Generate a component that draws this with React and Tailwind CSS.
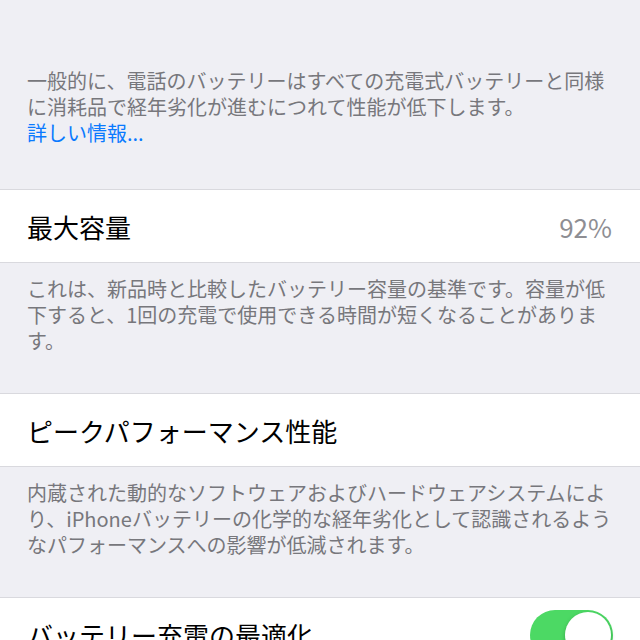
import React from 'react';

const font = { fontFamily: '"Noto Sans CJK JP", "Noto Sans", sans-serif' };

const Footer = ({ lines, className = '' }) => (
    <div className={`px-[27px] text-[20px] leading-[26px] text-[#77777c] ${className}`}>
        {lines.map((l, i) => (
            <div key={i} className="whitespace-nowrap">{l}</div>
        ))}
    </div>
);

const Cell = ({ children }) => (
    <div className="h-[74px] shrink-0 bg-white border-y border-[#d9d9de] flex items-center justify-between pl-[27px] pr-[28px] text-[26px] text-black">
        {children}
    </div>
);

const Toggle = () => (
    <div className="relative w-[83px] h-[50px] rounded-full bg-[#4cd964] shrink-0">
        <div className="absolute right-[2px] top-[2px] w-[46px] h-[46px] rounded-full bg-white shadow-[0_2px_4px_rgba(0,0,0,0.25)]" />
    </div>
);

export default function App() {
    return (
        <div className="w-[640px] h-[640px] overflow-hidden bg-[#efeff4] flex flex-col" style={font}>
            <div className="pt-[68px] pb-[43px] px-[27px] text-[20px] leading-[26px] text-[#77777c]">
                <div className="whitespace-nowrap">一般的に、電話のバッテリーはすべての充電式バッテリーと同様</div>
                <div className="whitespace-nowrap">に消耗品で経年劣化が進むにつれて性能が低下します。</div>
                <div className="text-[#0a7aff]">詳しい情報...</div>
            </div>

            <Cell>
                <span>最大容量</span>
                <span className="text-[#8e8e93]">92%</span>
            </Cell>
            <Footer
                className="pt-[13px] pb-[39px]"
                lines={[
                    'これは、新品時と比較したバッテリー容量の基準です。容量が低',
                    '下すると、1回の充電で使用できる時間が短くなることがありま',
                    'す。',
                ]}
            />

            <Cell>
                <span>ピークパフォーマンス性能</span>
            </Cell>
            <Footer
                className="pt-[13px] pb-[39px]"
                lines={[
                    '内蔵された動的なソフトウェアおよびハードウェアシステムによ',
                    'り、iPhoneバッテリーの化学的な経年劣化として認識されるよう',
                    'なパフォーマンスへの影響が低減されます。',
                ]}
            />

            <div className="h-[74px] shrink-0 bg-white border-t border-[#d9d9de] flex items-center justify-between pl-[27px] pr-[27px] text-[26px] text-black">
                <span>バッテリー充電の最適化</span>
                <Toggle />
            </div>
        </div>
    );
}
